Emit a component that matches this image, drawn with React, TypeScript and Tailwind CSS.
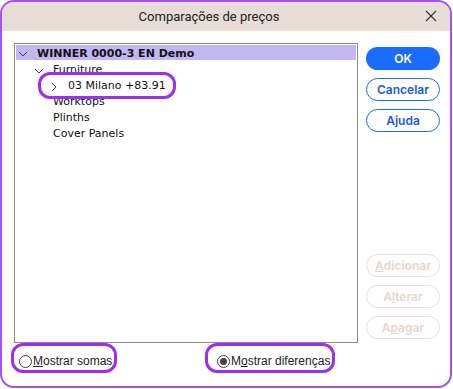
import React from "react";

const tree = "font-['DejaVu_Sans',sans-serif] text-[11px] text-[#111]";

const Chevron: React.FC<{ open?: boolean }> = ({ open }) => (
  <svg width="10" height="10" viewBox="0 0 10 10" className="shrink-0">
    {open ? (
      <path d="M1 3 L5 7 L9 3" fill="none" stroke="#444" strokeWidth="1" />
    ) : (
      <path d="M3 1 L7 5 L3 9" fill="none" stroke="#444" strokeWidth="1" />
    )}
  </svg>
);

const Btn: React.FC<{ kind: "primary" | "outline" | "disabled"; children: React.ReactNode }> = ({
  kind,
  children,
}) => {
  const base =
    "w-[74px] h-[23px] rounded-full flex items-center justify-center text-[12px] font-semibold font-['Inter',sans-serif]";
  if (kind === "primary") return <div className={`${base} bg-[#1a6cff] text-white`}>{children}</div>;
  if (kind === "outline")
    return <div className={`${base} border border-[#1a6cff] text-[#1a5ae8] bg-white`}>{children}</div>;
  return <div className={`${base} border border-[#ecdfd8] text-[#e6d6cd] bg-white`}>{children}</div>;
};

const Radio: React.FC<{ checked?: boolean }> = ({ checked }) => (
  <div className="w-[13px] h-[13px] rounded-full border border-[#444] bg-white flex items-center justify-center shrink-0">
    {checked && <div className="w-[7px] h-[7px] rounded-full bg-[#444]" />}
  </div>
);

export default function App() {
  return (
    <div className="w-[453px] h-[389px] bg-white relative">
      <div className="w-[452px] h-[388px] border-2 border-[#a64ff2] rounded-[14px] overflow-hidden flex flex-col bg-white">
        {/* title bar */}
        <div className="h-[29px] bg-[#e7dcd6] relative flex items-center justify-center shrink-0">
          <span className="font-['Roboto',sans-serif] text-[13px] text-[#222] mr-[34px]">
            Comparações de preços
          </span>
          <svg width="12" height="12" viewBox="0 0 12 12" className="absolute right-[13px] top-[8px]">
            <path d="M1 1 L11 11 M11 1 L1 11" stroke="#333" strokeWidth="1.1" />
          </svg>
        </div>

        {/* body */}
        <div className="flex pl-[12px] pt-[12px] gap-[8px]">
          <div className="w-[344px] h-[300px] border border-[#8a8a8a] p-[1px] bg-white">
            <div className={`h-[15px] pt-[3px] bg-[#c3b6f4] flex items-center pl-[2px] gap-[9px] ${tree} font-bold`}>
              <Chevron open />
              <span>WINNER 0000-3 EN Demo</span>
            </div>
            <div className={`h-[16px] pt-[5px] flex items-center pl-[18px] gap-[9px] ${tree}`}>
              <Chevron open />
              <span>Furniture</span>
            </div>
            <div className={`h-[16px] pt-[5px] flex items-center pl-[33px] gap-[9px] ${tree}`}>
              <Chevron />
              <span>03 Milano +83.91</span>
            </div>
            <div className={`h-[16px] pt-[5px] flex items-center pl-[37px] ${tree}`}>Worktops</div>
            <div className={`h-[16px] pt-[5px] flex items-center pl-[37px] ${tree}`}>Plinths</div>
            <div className={`h-[16px] pt-[5px] flex items-center pl-[37px] ${tree}`}>Cover Panels</div>
          </div>

          <div className="flex flex-col pt-[4px]">
            <div className="flex flex-col gap-[8px]">
              <Btn kind="primary">OK</Btn>
              <Btn kind="outline">Cancelar</Btn>
              <Btn kind="outline">Ajuda</Btn>
            </div>
            <div className="flex flex-col gap-[8px] mt-[122px]">
              <Btn kind="disabled">
                <span className="underline">A</span>dicionar
              </Btn>
              <Btn kind="disabled">
                A<span className="underline">l</span>terar
              </Btn>
              <Btn kind="disabled">
                A<span className="underline">p</span>agar
              </Btn>
            </div>
          </div>
        </div>

        {/* radios */}
        <div className="flex items-center pl-[17px] mt-[9px] text-[12px] font-['Liberation_Sans',sans-serif] text-[#222]">
          <div className="flex items-center gap-[1px] w-[198px]">
            <Radio />
            <span>
              <span className="underline">M</span>ostrar somas
            </span>
          </div>
          <div className="flex items-center gap-[1px]">
            <Radio checked />
            <span>
              M<span className="underline">o</span>strar diferenças
            </span>
          </div>
        </div>
      </div>

      {/* annotation rings */}
      <div className="absolute left-[38px] top-[72px] w-[138px] h-[27px] rounded-[12px] border-[3px] border-[#9d2ff0]" />
      <div className="absolute left-[11px] top-[343px] w-[106px] h-[30px] rounded-[12px] border-[3px] border-[#9d2ff0]" />
      <div className="absolute left-[205px] top-[343px] w-[130px] h-[30px] rounded-[12px] border-[3px] border-[#9d2ff0]" />
    </div>
  );
}
